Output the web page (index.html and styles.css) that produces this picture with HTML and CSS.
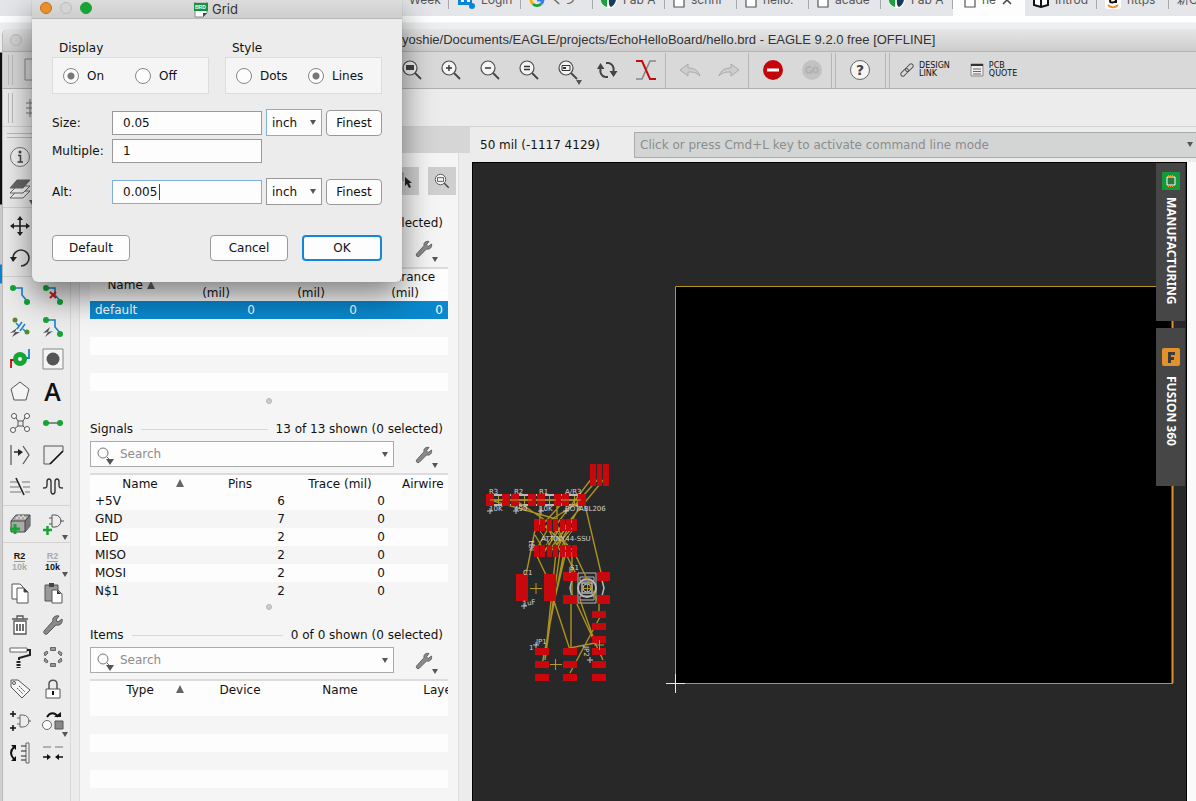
FILE: index.html
```html
<!DOCTYPE html>
<html lang="en">
<head>
<meta charset="utf-8">
<title>hello.brd - EAGLE</title>
<link rel="stylesheet" href="styles.css">
</head>
<body>
<svg class="defs" aria-hidden="true">
  <symbol id="wrench" viewBox="0 0 24 24"><path d="M21 6l-4 3-2-2 3-4c-4-1-7 2-6 5L3 18c-1 2 1 4 3 3l9-9c4 1 7-2 6-6z" fill="#8a8a8a" stroke="#555"/></symbol>
  <symbol id="page" viewBox="0 0 12 16"><path d="M1 1h7l3 3v11H1z" fill="#fff" stroke="#555" stroke-width="1.2"/></symbol>
  <symbol id="globe" viewBox="0 0 16 16"><circle cx="8" cy="8" r="8" fill="#fff"/><path d="M1 3a8 8 0 0 0 5 12V8z" fill="#19a33a"/><path d="M8 3c3 2 3 4 7 5-1 4-3 6-5 7-3-1-2-7-2-12z" fill="#153a5c"/></symbol>
  <symbol id="lens" viewBox="0 0 24 24"><circle cx="10" cy="10" r="7" fill="#f4f4f4" stroke="#4c4c4c" stroke-width="1.2"/><path d="M15 15l6 6" stroke="#444" stroke-width="1.8"/></symbol>
  <symbol id="finder" viewBox="0 0 20 20"><circle cx="7" cy="7" r="5" fill="none" stroke="#777"/><path d="M11 11l4 4" stroke="#666"/><path d="M10 13h8l-4 6z" fill="#555"/></symbol>
</svg>

<nav class="tabs" aria-label="Browser tabs">
  <div class="tab"><span class="tab-bare">Week</span></div>
  <div class="tab"><svg width="18" height="18"><path d="M1 1h14v13H1z" fill="#0a84d6"/><path d="M4 4h3v7H4zM10 7h3v4h-3z" fill="#fff"/><circle cx="15" cy="15" r="3" fill="#0a84d6"/></svg><span>Login</span></div>
  <div class="tab"><svg width="16" height="16" fill="none" stroke-width="3"><path d="M2 8a6 6 0 0 0 2 4" stroke="#f5b400"/><path d="M4 12a6 6 0 0 0 8 0" stroke="#19a33a"/><path d="M12 12a6 6 0 0 0 2-4H8" stroke="#3b7ded"/></svg><span>ぐつ</span></div>
  <div class="tab"><svg width="16" height="16"><use href="#globe"/></svg><span>Fab A</span></div>
  <div class="tab"><svg width="12" height="16"><use href="#page"/></svg><span>schni</span></div>
  <div class="tab"><svg width="12" height="16"><use href="#page"/></svg><span>hello.</span></div>
  <div class="tab"><svg width="12" height="16"><use href="#page"/></svg><span>acade</span></div>
  <div class="tab"><svg width="16" height="16"><use href="#globe"/></svg><span>Fab A</span></div>
  <div class="tab active"><svg width="12" height="16"><use href="#page"/></svg><span>he</span><svg width="10" height="10"><path d="M1 1l8 8M9 1l-8 8" stroke="#444" stroke-width="1.5"/></svg></div>
  <div class="tab"><svg width="16" height="16"><path d="M1 4l7 2 7-2v9l-7 2-7-2zM8 6v9" fill="#fff" stroke="#111" stroke-width="2"/></svg><span>Introd</span></div>
  <div class="tab"><svg width="16" height="18"><rect width="16" height="18" rx="3" fill="#fff"/><path d="M5 5c3-2 6-1 6 2v5M11 8c-4-1-6 0-6 2s4 2 6 0" fill="none" stroke="#111" stroke-width="2"/><path d="M3 14c3 3 7 3 10 0" fill="none" stroke="#f09020" stroke-width="2"/></svg><span>https</span></div>
  <div class="tab"><span class="cjk">新O</span></div>
</nav>

<main class="window">
  <header class="titlebar"><span class="light"></span><h1>yoshie/Documents/EAGLE/projects/EchoHelloBoard/hello.brd - EAGLE 9.2.0 free [OFFLINE]</h1></header>

  <div class="toolbar">
    <span class="grip"></span>
    <button class="tool" aria-label="Open"><svg width="22" height="24"><path d="M3 1h16v21H3z" fill="none" stroke="#888"/></svg></button>
    <div class="push"></div>
    <button class="tool" aria-label="Zoom to fit"><svg width="24" height="24"><use href="#lens"/><rect x="6" y="7" width="8" height="5" fill="#444"/></svg></button>
    <button class="tool" aria-label="Zoom in"><svg width="24" height="24"><use href="#lens"/><path d="M7 10h6M10 7v6" stroke="#333" stroke-width="1.4"/></svg></button>
    <button class="tool" aria-label="Zoom out"><svg width="24" height="24"><use href="#lens"/><path d="M7 10h6" stroke="#333" stroke-width="1.4"/></svg></button>
    <button class="tool" aria-label="Zoom redraw"><svg width="24" height="24"><use href="#lens"/><path d="M7 8.500h6M7 11.500h6" stroke="#333" stroke-width="1.3"/></svg></button>
    <button class="tool drop" aria-label="Zoom select"><svg width="24" height="24"><use href="#lens"/><path d="M6 7.500h8v5H6z" fill="none" stroke="#333"/><path d="M7 9h3v2H7z" fill="#333"/></svg></button>
    <button class="tool" aria-label="Refresh"><svg width="24" height="24" fill="none" stroke="#444" stroke-width="2.200"><path d="M10 19a7 7 0 0 1-4.500-8M14 5a7 7 0 0 1 4.500 8M11 5h3M10 19h3"/><path d="M2 11l3.500-6 4 6zM14.500 13h8l-4 6z" fill="#444" stroke="none"/></svg></button>
    <button class="tool wide" aria-label="Ratsnest"><svg width="24" height="24" fill="none" stroke-width="1.6"><path d="M22 3h-6L8 21H2" stroke="#888"/><path d="M2 3h6l8 18h6" stroke="#c80a0a" stroke-width="2"/></svg></button>
    <span class="rule"></span>
    <button class="tool" aria-label="Undo"><svg width="24" height="24"><path d="M2 12l8-6v4c6 0 10 2 12 8-4-4-7-4-12-4v4z" fill="#cdcdcd" stroke="#aaa"/></svg></button>
    <button class="tool" aria-label="Redo"><svg width="24" height="24"><path d="M22 12l-8-6v4C8 10 4 12 2 18c4-4 7-4 12-4v4z" fill="#cdcdcd" stroke="#aaa"/></svg></button>
    <span class="rule"></span>
    <button class="tool" aria-label="Stop"><svg width="24" height="24"><circle cx="12" cy="12" r="10" fill="#c4060b"/><path d="M6 10.500h12v3H6z" fill="#fff"/></svg></button>
    <button class="tool" aria-label="Go"><svg width="24" height="24"><circle cx="12" cy="12" r="10" fill="#c2c2c2"/><g fill="none" stroke="#b2b2b2" stroke-width="2"><path d="M11 9H9a3 3 0 0 0 0 6h2v-3"/><circle cx="15.500" cy="12" r="2.500"/></g></svg></button>
    <span class="rule double"></span>
    <button class="tool help" aria-label="Help">?</button>
    <span class="rule double"></span>
    <button class="link-tool"><svg width="14" height="14" fill="none" stroke="#555"><rect x="0" y="7" width="9" height="4" rx="2" transform="rotate(-45 5 9)"/><rect x="5" y="3" width="9" height="4" rx="2" transform="rotate(-45 9 5)"/></svg><span>DESIGN<br>LINK</span></button>
    <button class="link-tool"><svg width="14" height="14"><path d="M1 1h12v12H1z" fill="#eee" stroke="#888"/><path d="M1 2h12" stroke="#333" stroke-width="2"/><path d="M3 6h8M3 8.500h8M3 11h8" stroke="#666"/></svg><span>PCB<br>QUOTE</span></button>
  </div>

  <div class="toolbar second"><span class="grip"></span><button class="tool" aria-label="Grid"><svg width="22" height="22"><path d="M4 6h16M4 11h16M4 16h16M8 2v18M14 2v18" stroke="#777"/></svg></button></div>

  <div class="work">
    <aside class="palette" aria-label="Commands">
      <span class="grip flat"></span>
      <div class="group">
        <button aria-label="Info"><svg width="24" height="24"><circle cx="12" cy="12" r="9.500" fill="#f2f2f2" stroke="#777"/><circle cx="12" cy="7" r="1.5" fill="#444"/><path d="M10 10.500h2.500V17M9.500 17h5.500" fill="none" stroke="#444" stroke-width="1.6"/></svg></button><button aria-label="Show"></button>
        <button class="drop" aria-label="Layers"><svg width="24" height="24" stroke="#666"><path d="M2 21h13l7-7H9z" fill="#f4f4f4"/><path d="M2 16h13l7-7H9z" fill="#f4f4f4"/><path d="M2 11h13l7-8H9z" fill="#666"/></svg></button><button aria-label="Mark"></button>
      </div>
      <div class="group">
        <button aria-label="Move"><svg width="24" height="24"><path d="M3 12h18M12 3v18" stroke="#222" stroke-width="1.6"/><path d="M2 12l4-3v6zM22 12l-4-3v6zM12 2l-3 4h6zM12 22l-3-4h6z" fill="#222"/></svg></button><button aria-label="Mirror"></button>
        <button aria-label="Rotate"><svg width="24" height="24"><path d="M5 12a8 8 0 1 1 8 8" fill="none" stroke="#333" stroke-width="1.6"/><path d="M2 11h7l-4 5z" fill="#222"/></svg></button><button aria-label="Group"></button>
      </div>
      <div class="group">
        <button aria-label="Route"><svg width="24" height="24"><path d="M5 5h9v7l6 7" fill="none" stroke="#1782cf" stroke-width="1.6"/><circle cx="5" cy="5" r="3" fill="#16a434"/><circle cx="19" cy="19" r="3" fill="#16a434"/></svg></button>
        <button aria-label="Ripup"><svg width="24" height="24"><path d="M5 5h9v7l6 7" fill="none" stroke="#1782cf" stroke-width="1.6"/><circle cx="5" cy="5" r="3" fill="#16a434"/><circle cx="19" cy="19" r="3" fill="#16a434"/><path d="M9 9l6 6M15 9l-6 6" stroke="#c92010" stroke-width="2"/></svg></button>
        <button aria-label="Route multi"><svg width="24" height="24"><path d="M8 8l3 3M15 14l4 4M9 14l5-7M12 16l5-7" stroke="#1782cf" stroke-width="1.5"/><circle cx="7" cy="5" r="2.500" fill="#5b8a25"/><circle cx="19" cy="17" r="2.500" fill="#5b8a25"/><path d="M9 13l-7 5 5-1-3 5 8-5-5 0z" fill="#555"/></svg></button>
        <button aria-label="Autoroute"><svg width="24" height="24"><path d="M5 5h9v7l6 7" fill="none" stroke="#1782cf" stroke-width="1.6"/><circle cx="5" cy="5" r="3" fill="#16a434"/><circle cx="19" cy="19" r="3" fill="#16a434"/><path d="M9 12l-7 6 5-1-3 5 8-6-5 1z" fill="#555"/></svg></button>
        <button aria-label="Via"><svg width="24" height="24"><path d="M13 11h8V2" fill="none" stroke="#1782cf" stroke-width="1.8"/><path d="M11 13H3v8" fill="none" stroke="#c80a0a" stroke-width="1.8"/><circle cx="12" cy="12" r="7" fill="#16a434"/><circle cx="12" cy="12" r="2" fill="#f3f3f3"/></svg></button>
        <button aria-label="Hole"><svg width="24" height="24"><path d="M2 2h20v20H2z" fill="#f4f4f4" stroke="#888"/><circle cx="12" cy="12" r="6.500" fill="#555"/></svg></button>
        <button aria-label="Polygon"><svg width="24" height="24"><path d="M12 3l9 7-3 11H6L3 10z" fill="#f4f4f4" stroke="#555"/></svg></button>
        <button class="letter">A</button>
        <button aria-label="Ratsnest"><svg width="24" height="24" fill="#fff" stroke="#555"><path d="M7 5l3 5h5l3-5M6 18l4-3h5l3 3M10 10v5M15 10v5" fill="none"/><circle cx="6" cy="5" r="2.500"/><circle cx="19" cy="5" r="2.500"/><circle cx="5" cy="19" r="2.500"/><circle cx="19" cy="18" r="2.500"/></svg></button>
        <button aria-label="Signal"><svg width="24" height="24"><path d="M5 12h14" stroke="#4c6a52" stroke-width="1.4"/><circle cx="5" cy="12" r="3" fill="#16a434"/><circle cx="19" cy="12" r="3" fill="#16a434"/></svg></button>
        <button aria-label="Split"><svg width="24" height="24"><path d="M3 2v20M15 3l6 9-6 9" fill="none" stroke="#555" stroke-width="1.2"/><path d="M6 9h5" stroke="#222" stroke-width="1.5"/><path d="M10 6l5 3-5 4z" fill="#222"/></svg></button>
        <button aria-label="Miter"><svg width="24" height="24" fill="none"><path d="M22 8V3H3v18h6" stroke="#555"/><path d="M9 21L22 8" stroke="#111" stroke-width="1.7"/></svg></button>
        <button aria-label="Slice"><svg width="24" height="24"><path d="M2 7h8M14 7h8M2 12h9M15 12h7M2 17h11M17 17h5" stroke="#777"/><path d="M8 3l8 17" stroke="#222" stroke-width="1.6"/></svg></button>
        <button aria-label="Meander"><svg width="24" height="24"><path d="M2 13c3 0 4 0 4-3V7c0-4 4-4 4 0v9c0 4 4 4 4 0V7c0-4 4-4 4 0v3c0 3 1 3 4 3" fill="none" stroke="#333" stroke-width="1.4"/></svg></button>
      </div>
      <div class="group">
        <button aria-label="Add part"><svg width="24" height="24"><path d="M3 9l5-6h14v11l-5 6H3z" fill="#aaa" stroke="#444"/><path d="M17 9l5-6v11l-5 6z" fill="#777"/><path d="M3 9h14v11M17 9l5-6" fill="none" stroke="#444"/><path d="M8 6h2M12 6h2M16 6h2M10 4h2M14 4h2" stroke="#fff"/><path d="M2 17h10M7 12v10" stroke="#16a434" stroke-width="3"/></svg></button>
        <button class="drop" aria-label="Replace"><svg width="24" height="24"><path d="M11 3h3a6 6 0 0 1 0 12h-3zM8 6h3M8 12h3M19 9h4" fill="none" stroke="#555"/><path d="M2 18h9M6.500 14v9" stroke="#16a434" stroke-width="2.500"/></svg></button>
      </div>
      <div class="group">
        <button class="rename"><b>R2</b><i>10k</i></button>
        <button class="rename value drop"><i>R2</i><b>10k</b></button>
        <button aria-label="Copy"><svg width="24" height="24" fill="#fff" stroke="#555"><path d="M4 3h8l3 3v12H4z"/><path d="M9 7h7l4 4v11H9z"/><path d="M16 7v4h4z" fill="#333"/></svg></button>
        <button aria-label="Paste"><svg width="24" height="24"><path d="M4 4h13v16H4z" fill="#999" stroke="#555"/><path d="M8 2h5v4H8z" fill="#444"/><path d="M11 9h6l4 4v9H11z" fill="#fff" stroke="#555"/><path d="M16 9v4h4z" fill="#333"/></svg></button>
        <button aria-label="Delete"><svg width="24" height="24" fill="#fff" stroke="#555" stroke-width="1.300"><path d="M6 8h12v13H6zM4 6h16M9 6V3h6v3"/><path d="M9 11v7M12 11v7M15 11v7" stroke="#222"/></svg></button>
        <button aria-label="Properties"><svg width="24" height="24"><use href="#wrench"/></svg></button>
        <button aria-label="Paint"><svg width="24" height="24"><path d="M2 3h17v4H2z" fill="#fff" stroke="#666"/><path d="M19 5h3v5l-11 3v2" fill="none" stroke="#222" stroke-width="2"/><path d="M10.500 16v7" stroke="#222" stroke-width="4" stroke-dasharray="2 1"/></svg></button>
        <button aria-label="Optimize"><svg width="24" height="24" fill="#999" stroke="#666"><path d="M9.500 2.500h5v3h-5zM9.500 18.500h5v3h-5z"/><path id="pad" d="M3 8l3-2 1 2-3 3zM21 8l-3-2-1 2 3 3zM3 16l3 2 1-2-3-3zM21 16l-3 2-1-2 3-3z"/></svg></button>
        <button aria-label="Name"><svg width="24" height="24" fill="#f5f5f5" stroke="#555"><path d="M3 3h7l12 10-8 8L3 10z"/><circle cx="6" cy="6" r="1.5"/><path d="M9 11l6 6M11 9l6 6" stroke-dasharray="2 1"/></svg></button>
        <button aria-label="Lock"><svg width="24" height="24"><path d="M8 12V7c0-5 8-5 8 0v5" fill="none" stroke="#555" stroke-width="1.5"/><path d="M5 12h14v9H5z" fill="#fff" stroke="#555"/><path d="M12 14v4" stroke="#111" stroke-width="2"/></svg></button>
        <button aria-label="Gate swap"><svg width="24" height="24"><path d="M12 6h3a6 6 0 0 1 0 12h-3zM9 9h3M9 15h3M20 12h3" fill="none" stroke="#666"/><path d="M2 5h6M5 2v6M2 19h6M5 16v6" stroke="#111" stroke-width="1.5"/></svg></button>
        <button class="drop" aria-label="Change"><svg width="24" height="24"><circle cx="6" cy="16" r="4.500" fill="#fff" stroke="#666"/><path d="M14 12h8v8h-8z" fill="#888" stroke="#555"/><path d="M6 8c3-5 8-5 11 0" fill="none" stroke="#111" stroke-width="2"/><path d="M13 8h7V3z" fill="#111"/></svg></button>
        <button aria-label="Pin swap"><svg width="24" height="24"><path d="M6 6c-4 4-4 8 0 12" fill="none" stroke="#111" stroke-width="2"/><path d="M3 4h5v5zM3 20h5v-5z" fill="#111"/><path d="M18 2h3v20h-3z" fill="none" stroke="#666"/><path d="M13 5h5M13 10h5M13 15h5M13 19h5" stroke="#222"/></svg></button>
        <button aria-label="Align"><svg width="24" height="24"><path d="M2 6h8M14 6h8" stroke="#777"/><path d="M2 16h5M17 16h5" stroke="#111" stroke-width="1.5"/><path d="M6 13l4 3-4 3zM18 13l-4 3 4 3z" fill="#111"/></svg></button>
      </div>
    </aside>

    <div class="side">
      <div class="side-top"></div>
      <div class="side-body">
        <div class="side-tools">
          <button aria-label="Select"><svg width="24" height="24"><path d="M2 4h8v8" fill="none" stroke="#777"/><path d="M12 8v9l2-2 2 4 2-1-2-4h3z" fill="#222"/></svg></button>
          <button aria-label="Zoom to selection"><svg width="18" height="18" viewBox="0 0 24 24"><use href="#lens"/><path d="M6 7.500h8v5H6z" fill="none" stroke="#333"/></svg></button>
        </div>

        <section class="pane">
          <div class="pane-head"><h2>Net Classes</h2><hr><span>1 of 1 shown (1 selected)</span></div>
          <div class="pane-find"><label class="find"><svg width="20" height="20"><use href="#finder"/></svg><input type="text" placeholder="Search" aria-label="Search net classes"></label><button class="drop" aria-label="Settings"><svg width="20" height="20"><use href="#wrench"/></svg></button></div>
          <div class="sheet">
            <table class="classes">
              <thead><tr><th>Name <i class="up"></i></th><th>Min Width<br>(mil)</th><th>Min Via Drill<br>(mil)</th><th>Clearance<br>(mil)</th></tr></thead>
              <tbody><tr class="picked"><td>default</td><td>0</td><td>0</td><td>0</td></tr><tr><td colspan="4"></td></tr><tr><td colspan="4"></td></tr><tr><td colspan="4"></td></tr><tr><td colspan="4"></td></tr></tbody>
            </table>
          </div>
          <div class="handle"></div>
        </section>

        <section class="pane">
          <div class="pane-head"><h2>Signals</h2><hr><span>13 of 13 shown (0 selected)</span></div>
          <div class="pane-find"><label class="find"><svg width="20" height="20"><use href="#finder"/></svg><input type="text" placeholder="Search" aria-label="Search signals"></label><button class="drop" aria-label="Settings"><svg width="20" height="20"><use href="#wrench"/></svg></button></div>
          <div class="sheet">
            <table class="signals">
              <thead><tr><th>Name<i class="up"></i></th><th>Pins</th><th>Trace (mil)</th><th class="cut">Airwire (mil)</th></tr></thead>
              <tbody>
                <tr><td>+5V</td><td>6</td><td>0</td><td></td></tr>
                <tr><td>GND</td><td>7</td><td>0</td><td></td></tr>
                <tr><td>LED</td><td>2</td><td>0</td><td></td></tr>
                <tr><td>MISO</td><td>2</td><td>0</td><td></td></tr>
                <tr><td>MOSI</td><td>2</td><td>0</td><td></td></tr>
                <tr><td>N$1</td><td>2</td><td>0</td><td></td></tr>
              </tbody>
            </table>
          </div>
          <div class="handle"></div>
        </section>

        <section class="pane last">
          <div class="pane-head"><h2>Items</h2><hr><span>0 of 0 shown (0 selected)</span></div>
          <div class="pane-find"><label class="find"><svg width="20" height="20"><use href="#finder"/></svg><input type="text" placeholder="Search" aria-label="Search items"></label><button class="drop" aria-label="Settings"><svg width="20" height="20"><use href="#wrench"/></svg></button></div>
          <div class="sheet">
            <table class="signals">
              <thead><tr><th>Type<i class="up"></i></th><th>Device</th><th>Name</th><th>Layer</th></tr></thead>
              <tbody><tr><td colspan="4"></td></tr><tr><td colspan="4"></td></tr><tr><td colspan="4"></td></tr><tr><td colspan="4"></td></tr><tr><td colspan="4"></td></tr><tr><td colspan="4"></td></tr></tbody>
            </table>
          </div>
        </section>
      </div>
    </div>

    <div class="editor">
      <div class="command">
        <output>50 mil (-1117 4129)</output>
        <div class="line"><input type="text" placeholder="Click or press Cmd+L key to activate command line mode" aria-label="Command line"><i class="down"></i></div>
      </div>
      <div class="canvas">
        <svg class="board" role="img" aria-label="Board layout">
          <g transform="translate(-473,-163)">
            <rect x="675" y="286" width="498" height="397" fill="#000"/>
            <path d="M1173 286.500H675.500V683.500H1173" fill="none" stroke="#b8981c"/>
            <path d="M1172.500 286v397" stroke="#e0922a" stroke-width="2"/>
            <path d="M666 683.500h19M675.500 674v19" stroke="#e8e8e8"/>
            <g fill="none" stroke="#b8b8b8">
              <path d="M490 495h94M490 505h94" stroke-width="2"/>
              <path d="M578 573h18v30h-18zM580 577h14v4h-14zM580 596h14v4h-14z"/>
              <circle cx="587" cy="588" r="9" stroke-width="2"/><circle cx="587" cy="588" r="4"/><path d="M582 583h10v10h-10zM572 580l-2 8 2 8M602 580l2 8-2 8" stroke-width="1.5"/>
            </g>
            <path d="M528 577h16v22h-16z" fill="none" stroke="#0a3434"/>
            <g fill="none" stroke="#ac931f" stroke-width="1.400">
              <path d="M490 500h95M490 500l66 19M515 500l30 20M540 500v25M557 500v22M565 500l-20 22M583 500l-36 22M583 500L556 551M592 478L556 525M599 478L575 505M605 478L562 530M585 505L602 577"/>
              <path d="M536 525l-11 55M543 525l32 27M550 525l-15 27M557 525l10 27M562 525l-18 27M568 525l-20 27M575 525l-25 27M535 535l10 17M535 552l12 25M546 525l15 27"/>
              <path d="M556 552L546 650M560 552L545 660M564 552L542 665M566 552L555 598M572 552v48M553 598l17 52M571 600v50M575 600l28 60M580 600l16 45M574 552l24 50M599 600v15M600 617l-30 56M565 552l10 20M570 648l30-6"/>
            </g>
            <g fill="#c8080c">
              <path d="M590 464h6v22h-6zM597 464h5v22h-5zM603 464h6v22h-6z"/>
              <path d="M486 494h8v12h-8zM502 494h8v12h-8zM511 494h8v12h-8zM528 494h8v12h-8zM537 494h8v12h-8zM554 494h7v12h-7zM562 494h7v12h-7zM578 494h8v12h-8z"/>
              <path d="M534 519h5v12h-5zM540 519h5v12h-5zM547 519h5v12h-5zM553 519h5v12h-5zM560 519h5v12h-5zM566 519h5v12h-5zM572 519h5v12h-5z"/>
              <path d="M534 545h5v12h-5zM540 545h5v12h-5zM547 545h5v12h-5zM553 545h5v12h-5zM560 545h5v12h-5zM566 545h5v12h-5zM572 545h5v12h-5z"/>
              <path d="M516 574h12v27h-12zM544 574h12v27h-12zM563 572h14v9h-14zM597 572h13v9h-13zM563 595h14v9h-14zM597 595h13v9h-13z"/>
              <path d="M592 611h14v7h-14zM592 623h14v7h-14zM592 636h14v7h-14zM592 648h14v7h-14zM592 661h14v7h-14zM592 674h14v7h-14z"/>
              <path d="M535 648h14v7h-14zM535 661h14v7h-14zM535 674h14v7h-14zM563 648h14v7h-14zM563 661h14v7h-14zM563 674h14v7h-14z"/>
            </g>
            <path d="M490 500h13M510 500h22M536 500h20M561 500h20M536 583v11M530 588.500h12M555.500 659v11M550 664.500h12M587.500 583v10M582 588.500h10M498.500 496v8M524.500 496v8M549.500 496v8M574.500 496v8M599.500 640v10M594 645h10M540 531l10 14M556 531l-10 14M556 531l12 14M572 531l-10 14M564 531l-8 14" fill="none" stroke="#b39a22"/>
            <g class="silk">
              <text x="489" y="494">R3</text><text x="514" y="494">R2</text><text x="539" y="494">R1</text><text x="565" y="494">A/R3</text>
              <text x="489" y="511">10K</text><text x="514" y="511">499</text><text x="539" y="511">10K</text><text x="565" y="511">BOTABL206</text>
              <text x="541" y="541">ATTINY44-SSU</text><text x="534" y="551" transform="rotate(-90 534 551)">IC1</text>
              <text x="523" y="575">C1</text><text x="523" y="606" transform="rotate(-8 523 606)">1uF</text><text x="570" y="570">S1</text>
              <text x="536" y="644">JP1</text><text x="529" y="650">1</text><text x="584" y="646" transform="rotate(90 584 646)">JP2</text>
            </g>
            <path d="M487 511h6M490 508v6M513 511h6M516 508v6M538 511h6M541 508v6M563 511h6M566 508v6M521 606h6M524 603v6M570 567v6M587 660h6M590 657v6M533 645h6M536 642v6M529 545h6M532 542v6" stroke="#c0c0c0"/>
          </g>
        </svg>
        <div class="docks">
          <button class="dock"><svg width="18" height="18"><rect width="18" height="18" rx="1" fill="#159a3b"/><path d="M5 5h8v8H5z" fill="#2a7a3e" stroke="#fff"/><path d="M6 4h6M6 14h6" stroke="#f09a28" stroke-width="2" stroke-dasharray="1 1"/></svg><span>MANUFACTURING</span></button>
          <button class="dock fusion"><svg width="18" height="18"><rect width="18" height="18" rx="2" fill="#e4912a"/><path d="M6 4h7v3H9v2h3v3H9v3H6z" fill="#3b3b3b"/></svg><span>FUSION 360</span></button>
        </div>
      </div>
    </div>
  </div>
</main>

<form class="dialog" role="dialog" aria-label="Grid">
  <div class="dialog-title">
    <span class="light orange"></span><span class="light"></span><span class="light green"></span>
    <strong><svg width="14" height="16"><path d="M1 0h12v11l-4 4H1z" fill="#fff" stroke="#888"/><path d="M0 1h14v8H0z" fill="#16923a"/><path d="M9 15v-4h4z" fill="#444"/><text x="1" y="7" class="brd">BRD</text></svg>Grid</strong>
  </div>
  <div class="dialog-body">
    <div class="choices">
      <fieldset><legend>Display</legend><div class="box"><label><input type="radio" name="display" checked>On</label><label><input type="radio" name="display">Off</label></div></fieldset>
      <fieldset><legend>Style</legend><div class="box near"><label><input type="radio" name="style">Dots</label><label><input type="radio" name="style" checked>Lines</label></div></fieldset>
    </div>
    <div class="fields">
      <label for="size">Size:</label><input id="size" type="text" value="0.05"><span class="pick focus"><select aria-label="Size unit"><option>inch</option></select><i class="down"></i></span><button type="button">Finest</button>
      <label for="multiple">Multiple:</label><input id="multiple" type="text" value="1"><span></span><span></span>
      <label class="alt" for="alt">Alt:</label><span class="entry alt"><input class="focus" id="alt" type="text" value="0.005"><i class="caret"></i></span><span class="pick alt"><select aria-label="Alt unit"><option>inch</option></select><i class="down"></i></span><button class="alt" type="button">Finest</button>
    </div>
    <div class="actions"><button type="button">Default</button><button class="cancel" type="button">Cancel</button><button class="ok" type="button">OK</button></div>
  </div>
</form>
</body>
</html>
```
FILE: styles.css
```css
* { box-sizing: border-box; }
html, body { height: 100%; }
body {
  margin: 0;
  display: flex;
  flex-direction: column;
  overflow: hidden;
  position: relative;
  background: linear-gradient(#fff 0 22px, #eceef0 23px 52px, #111 53px 204px, #ccc 205px 264px, #0a84d6 265px 283px, #d0d0d0 284px);
  color: #111;
  font: 12px/16px "DejaVu Sans", "Noto Sans CJK JP", sans-serif;
}
button, input, select { font: inherit; color: inherit; margin: 0; }
button { padding: 0; border: 0; background: none; }
h1, h2 { margin: 0; font: inherit; }
.defs { position: absolute; width: 0; height: 0; }

/* browser tabs */
.tabs {
  flex: none;
  display: flex;
  align-items: flex-end;
  height: 16px;
  padding-left: 377px;
  overflow: hidden;
  background: #e4e6e9;
  font: 12px/16px Inter, "Noto Sans CJK JP", sans-serif;
  color: #555;
}
.tab {
  flex: none;
  display: flex;
  align-items: center;
  gap: 6px;
  width: 72px;
  height: 32px;
  padding-left: 8px;
  overflow: hidden;
  white-space: nowrap;
  background: linear-gradient(#a8a8a8, #a8a8a8) right 11px / 1px 14px no-repeat;
}
.tab svg { flex: none; }
.tab.active { background: #fdfdfd; padding-left: 11px; }
.tab-bare { padding-left: 24px; }

/* main window */
.window {
  flex: 1;
  min-height: 0;
  display: flex;
  flex-direction: column;
  margin: 13px 0 0 2px;
  border-left: 1px solid #bbb;
  border-top-left-radius: 6px;
  overflow: hidden;
  background: #ececec;
}
.titlebar {
  flex: none;
  display: flex;
  align-items: center;
  height: 23px;
  padding-left: 7px;
  background: linear-gradient(#e6e6e6, #cdcdcd);
  border-bottom: 1px solid #b4b4b4;
  font: 13px/16px "Liberation Sans", sans-serif;
  color: #333;
  white-space: nowrap;
}
.titlebar h1 { padding-left: 380px; }
.light { width: 12px; height: 12px; border: 1px solid #bbb; border-radius: 50%; background: #d4d4d4; }
.toolbar {
  flex: none;
  display: flex;
  align-items: center;
  height: 37px;
  padding-left: 5px;
  background: #d9d9d9;
  border-bottom: 1px solid #b0b0b0;
}
.toolbar.second { height: 38px; background: #ececec; border-color: #d2d2d2; }
.grip { width: 5px; height: 30px; border: solid #bbb; border-width: 0 1px; }
.tool { position: relative; flex: none; display: flex; justify-content: center; width: 39px; }
.push { flex: none; width: 340px; }
.rule { flex: none; width: 5px; height: 35px; border-left: 1px solid #b5b5b5; }
.rule.double { border-right: 1px solid #b5b5b5; }
.rule ~ .help {
  width: 20px;
  height: 20px;
  margin: 0 15px 0 14px;
  border: 1px solid #666;
  border-radius: 50%;
  background: #f5f5f5;
  color: #444;
  font-weight: bold;
  font-size: 14px;
  line-height: 18px;
}
.link-tool { display: flex; align-items: center; gap: 5px; margin-left: 10px; margin-right: 10px; font: 8px/8px "DejaVu Sans", sans-serif; text-align: left; }
.drop { position: relative; }
.drop::after {
  content: "";
  position: absolute;
  right: 5px;
  bottom: -3px;
  border: 3px solid transparent;
  border-top: 5px solid #555;
  border-bottom: 0;
}

.work { flex: 1; min-height: 0; display: flex; }
.palette { flex: none; width: 68px; padding-top: 6px; border-right: 1px solid #d8d8d8; overflow: hidden; }
.grip.flat { display: block; width: 60px; height: 5px; margin: 0 4px 3px; border-width: 1px 0; }
.group { display: grid; grid-template-columns: 33px 33px; grid-auto-rows: 32px; padding-bottom: 2px; }
.group + .group { border-top: 1px solid #d2d2d2; padding-top: 2px; }
.group button { display: flex; align-items: center; justify-content: center; }
.group .drop::after { right: 1px; bottom: 0; }
.group .letter { font: 600 25px/32px "Open Sans", sans-serif; }
.group .rename { flex-direction: column; font: 9px/10px "Liberation Sans", sans-serif; }
.rename b, .rename i { font-style: normal; font-weight: bold; }
.rename > :first-child { border-bottom: 1px solid #999; }
.rename i { color: #aaa; }

/* selection panel */
.side { flex: none; width: 399px; display: flex; flex-direction: column; padding-left: 8px; }
.side-top { flex: none; height: 26px; background: #d6d6d6; }
.side-body { flex: 1; min-height: 0; width: 380px; padding: 14px 10px 0 10px; overflow: hidden; background: #f5f5f5; border: solid #ddd; border-width: 0 1px; }
.side-tools { display: flex; justify-content: flex-end; gap: 9px; height: 46px; margin-right: -8px; }
.side-tools button { width: 28px; height: 28px; display: flex; align-items: center; justify-content: center; background: #cfcfcf; }
.pane { height: 206px; display: flex; flex-direction: column; }
.pane.last { height: auto; }
.pane-head { flex: none; display: flex; align-items: center; height: 20px; padding-right: 5px; }
.pane-head hr { flex: 1; height: 1px; margin: 0 8px; border: 0; background: #d8d8d8; }
.pane-find { flex: none; display: flex; justify-content: space-between; height: 26px; margin: 2px 0 6px; }
.find { display: flex; align-items: center; width: 304px; border: 1px solid #aaa; background: #fdfdfd; padding: 0 5px; }
.find input { flex: 1; min-width: 0; padding: 0 0 0 4px; border: 0; outline: 0; background: none; }
.find svg { margin-top: 4px; }
.find::after, .down { content: ""; border: 3px solid transparent; border-top: 5px solid #555; border-bottom: 0; }
input::placeholder { color: #8c8c8c; opacity: 1; }
.pane-find button { width: 44px; padding: 4px 4px 0 0; }
.pane-find .drop::after { right: 10px; bottom: -1px; }
.sheet { flex: 1; min-height: 0; overflow: hidden; border-top: 2px solid #dcdcdc; }
table { border-collapse: collapse; table-layout: fixed; width: 400px; }
.classes { width: 358px; }
th, td { padding: 0 5px; font-weight: normal; line-height: 16px; height: 18px; }
thead th { height: 17px; white-space: nowrap; }
.classes thead th { height: 31px; }
.classes th:nth-child(1) { width: 82px; }
.classes th:nth-child(2) { width: 88px; }
.classes th:nth-child(3) { width: 102px; }
thead, tbody tr:nth-child(odd) { background: #fdfdfd; }
td { text-align: right; }
td:first-child { text-align: left; }
th { position: relative; }
th.cut { text-align: left; padding-left: 12px; }
.up { display: inline-block; border: 4px solid transparent; border-bottom: 8px solid #666; border-top: 0; }
.signals .up { position: absolute; right: 6px; top: 4px; }
tbody tr.picked { background: #0a88ce; color: #fff; }
.handle { flex: none; width: 6px; height: 6px; margin: 4px auto 15px; border-radius: 50%; background: #ccc; border: 1px solid #b5b5b5; }

/* board editor */
.editor { flex: 1; min-width: 0; display: flex; flex-direction: column; }
.command { flex: none; display: flex; align-items: center; height: 35px; gap: 24px; padding-left: 10px; }
.command output { flex: none; width: 130px; white-space: nowrap; }
.line { flex: 1; display: flex; align-items: center; height: 26px; padding: 0 3px 0 5px; border: 1px solid #aaa; border-right: 0; background: #d3d5d4; }
.line input { flex: 1; border: 0; padding: 0; outline: 0; background: none; }
.canvas { flex: 1; min-height: 0; position: relative; margin: 0 9px 0 2px; border: 1px solid #000; border-bottom: 0; background: #282828; box-shadow: 9px 0 #fafafa; }
.board { display: block; width: 100%; height: 100%; }
.silk { fill: #d0d0d0; font: 7px "DejaVu Sans", sans-serif; }
.docks { position: absolute; top: 0; right: 1px; display: flex; flex-direction: column; gap: 7px; }
.dock { display: flex; flex-direction: column; align-items: center; width: 29px; height: 158px; padding-top: 9px; gap: 7px; background: #464646; color: #fff; }
.dock.fusion { padding-top: 20px; gap: 10px; }
.dock span { writing-mode: vertical-rl; font: bold 12px/16px "Noto Sans", sans-serif; }

/* grid dialog */
.dialog {
  position: absolute;
  left: 32px;
  top: 0;
  width: 370px;
  border-radius: 0 0 6px 6px;
  background: #ececec;
  box-shadow: 0 0 1px #777, 0 14px 32px rgba(0, 0, 0, .5);
}
.dialog-title { display: flex; gap: 8px; height: 19px; padding: 2px 8px 0; background: linear-gradient(#dcdcdc, #cecece); border-bottom: 1px solid #b8b8b8; }
.orange { background: #e8912a; border-color: #c86a20; }
.green { background: #16a434; border-color: #16a434; }
.dialog-title strong { flex: 1; display: flex; justify-content: center; gap: 4px; padding-right: 62px; font: 13px/14px Inter, sans-serif; color: #333; }
.brd { font: bold 5px "Liberation Sans", sans-serif; fill: #fff; }
.dialog-body { padding: 21px 20px; }
.choices { display: grid; grid-template-columns: 157px 157px; gap: 16px; }
fieldset { margin: 0; padding: 0; border: 0; min-width: 0; }
legend { padding: 0 7px 1px; }
.box { display: flex; height: 37px; padding-left: 10px; border: 1px solid #dcdcdc; background: #f5f5f5; }
.box label { display: flex; align-items: center; width: 72px; gap: 8px; }
input[type="radio"] { appearance: none; width: 16px; height: 16px; border: 1px solid #888; border-radius: 50%; background: #fdfdfd; }
input[type="radio"]:checked { background: radial-gradient(#777 0 3px, #fdfdfd 4px); }
.fields { display: grid; grid-template-columns: 56px 150px 56px 56px; column-gap: 4px; row-gap: 3px; align-items: center; margin-top: 15px; }
.fields label { white-space: nowrap; }
.fields input { width: 100%; height: 24px; padding: 0 0 0 10px; border: 1px solid #999; background: #fdfdfd; outline: 0; }
.fields .focus { border-color: #7fb0dc; }
.entry { position: relative; display: flex; }
.caret { position: absolute; left: 47px; top: 4px; width: 1px; height: 16px; background: #444; }
.pick { display: flex; align-items: center; height: 27px; padding: 0 5px; border: 1px solid #999; background: #fdfdfd; }
.pick select { flex: 1; min-width: 0; appearance: none; border: 0; padding: 0; background: none; }
.fields .alt { margin-top: 12px; }
.dialog button { height: 26px; border: 1px solid #999; border-radius: 4px; background: #fdfdfd; }
.actions { display: flex; margin-top: 30px; }
.actions button { width: 78px; }
.cancel { margin-left: auto; margin-right: 14px; }
.actions .ok { width: 80px; border: 2px solid #1488d8; }
```
